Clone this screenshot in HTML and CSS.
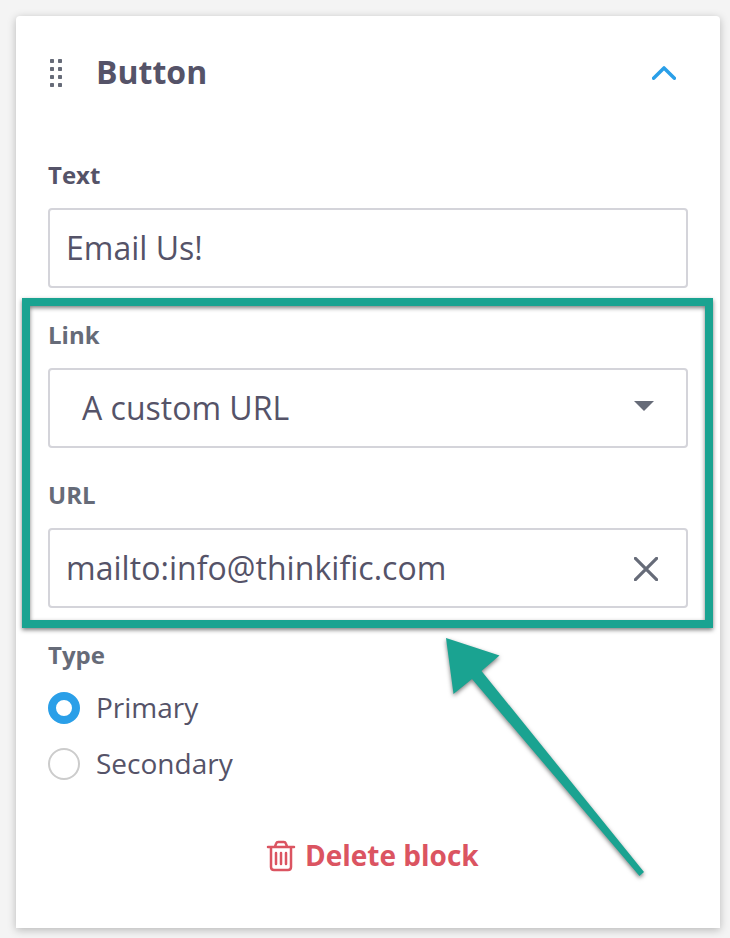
FILE: index.html
```html
<!DOCTYPE html>
<html lang="en">
<head>
<meta charset="utf-8">
<title>Button block</title>
<link rel="stylesheet" href="styles.css">
</head>
<body>
<main class="card">
  <header class="card-header">
    <svg class="grip" width="12" height="28" viewBox="0 0 12 28">
      <rect x="0" y="0" width="4" height="4" rx=".7"/><rect x="8" y="0" width="4" height="4" rx=".7"/>
      <rect x="0" y="8" width="4" height="4" rx=".7"/><rect x="8" y="8" width="4" height="4" rx=".7"/>
      <rect x="0" y="16" width="4" height="4" rx=".7"/><rect x="8" y="16" width="4" height="4" rx=".7"/>
      <rect x="0" y="24" width="4" height="4" rx=".7"/><rect x="8" y="24" width="4" height="4" rx=".7"/>
    </svg>
    <h1 class="title">Button</h1>
    <svg class="chevron" width="24" height="14" viewBox="0 0 24 14"><path d="M1.6 12.2 12 1.9l10.4 10.3"/></svg>
  </header>
  <form class="fields">
    <div class="field">
      <div class="label label-dark">Text</div>
      <div class="control"><span>Email Us!</span></div>
    </div>
    <div class="field">
      <div class="label">Link</div>
      <div class="control select"><span>A custom URL</span>
        <svg class="caret" width="20" height="10" viewBox="0 0 20 10"><path d="M0 0h20L10 10z"/></svg>
      </div>
    </div>
    <div class="field">
      <div class="label">URL</div>
      <div class="control clearable"><span class="url">mailto:info@thinkific.com</span>
        <svg class="clear" width="24" height="24" viewBox="0 0 24 24"><path d="M1.4 1.4l21.2 21.2M22.6 1.4 1.4 22.6"/></svg>
      </div>
    </div>
    <div class="field">
      <div class="label">Type</div>
      <div class="options">
        <div class="option"><span class="radio radio-on"></span><span class="option-text">Primary</span></div>
        <div class="option"><span class="radio"></span><span class="option-text">Secondary</span></div>
      </div>
    </div>
  </form>
  <div class="delete">
    <svg class="trash" width="28" height="30" viewBox="0 0 28 30">
      <path d="M1 6h26M8 5.500 9.200 2.400Q9.700 1 11.200 1h5.600q1.500 0 2 1.400L20 5.500M4 6v20q0 3 3 3h14q3 0 3-3V6"/>
      <path d="M9 12v11M14 12v11M19 12v11"/>
    </svg>
    <span>Delete block</span>
  </div>
</main>
<div class="highlight"></div>
<svg class="arrow" width="730" height="938" viewBox="0 0 730 938"><path d="M446 638l53.500 17.500-18 15.500L644 872l-4.500 4L472 679l-18.500 15z"/></svg>
</body>
</html>
```

FILE: styles.css
```css
* { box-sizing: border-box; }
body {
  margin: 0;
  padding: 16px 10px 10px 16px;
  height: 938px;
  overflow: hidden;
  background: #f4f4f4;
  color: #555368;
  font-family: "Open Sans", sans-serif;
}
.card {
  height: 912px;
  background: #fff;
  border-radius: 4px 4px 0 0;
  box-shadow: 0 2px 8px rgba(0, 0, 0, .25);
}
.card-header {
  display: flex;
  align-items: center;
  height: 112px;
  padding: 0 44px 0 34px;
}
.grip { fill: #666b78; margin-top: 2px; }
.title {
  margin: 0 auto 0 34px;
  font-size: 32px;
  line-height: 44px;
  font-weight: 700;
}
.chevron { margin-top: 2px; fill: none; stroke: #2a9fe8; stroke-width: 3.5; stroke-linecap: round; stroke-linejoin: round; }
.fields { padding: 32px 32px 0; }
.field { height: 160px; }
.label {
  height: 48px;
  font-size: 24px;
  line-height: 30px;
  font-weight: 700;
  color: #666b78;
}
.label-dark { color: #555368; }
.control {
  display: flex;
  align-items: center;
  justify-content: space-between;
  height: 80px;
  padding: 0 16px;
  border: 2px solid #d4d4da;
  border-radius: 4px;
  font-size: 32px;
  line-height: 44px;
}
.select { padding: 0 32px; }
.clearable { padding-right: 28px; }
.url { letter-spacing: .04px; }
.caret { fill: #666b78; margin-top: -5px; }
.clear { fill: none; stroke: #666b78; stroke-width: 3.2; stroke-linecap: round; margin-top: 2px; }
.options { display: grid; gap: 16px; }
.option { display: flex; align-items: center; gap: 16px; height: 40px; font-size: 28px; line-height: 38px; }
.option-text { height: 40px; }
.radio { width: 32px; height: 32px; border: 2px solid #ccc; border-radius: 50%; }
.radio-on { border: 8px solid #2a9fe8; }
.delete {
  display: flex;
  align-items: center;
  gap: 10px;
  height: 40px;
  margin: 36px 0 0 251px;
  color: #db5461;
  font-size: 28px;
  line-height: 38px;
  font-weight: 700;
}
.delete span { height: 40px; }
.trash { fill: none; stroke: currentColor; stroke-width: 2.5; stroke-linecap: round; overflow: visible; }
.highlight {
  position: absolute;
  left: 22px;
  top: 298px;
  width: 691px;
  height: 330px;
  border: 8px solid #1aa391;
  filter: drop-shadow(0 2px 2px rgba(0, 0, 0, .5));
}
.arrow { position: absolute; left: 0; top: 0; fill: #1aa391; filter: drop-shadow(0 2px 2px rgba(0, 0, 0, .5)); }
```
